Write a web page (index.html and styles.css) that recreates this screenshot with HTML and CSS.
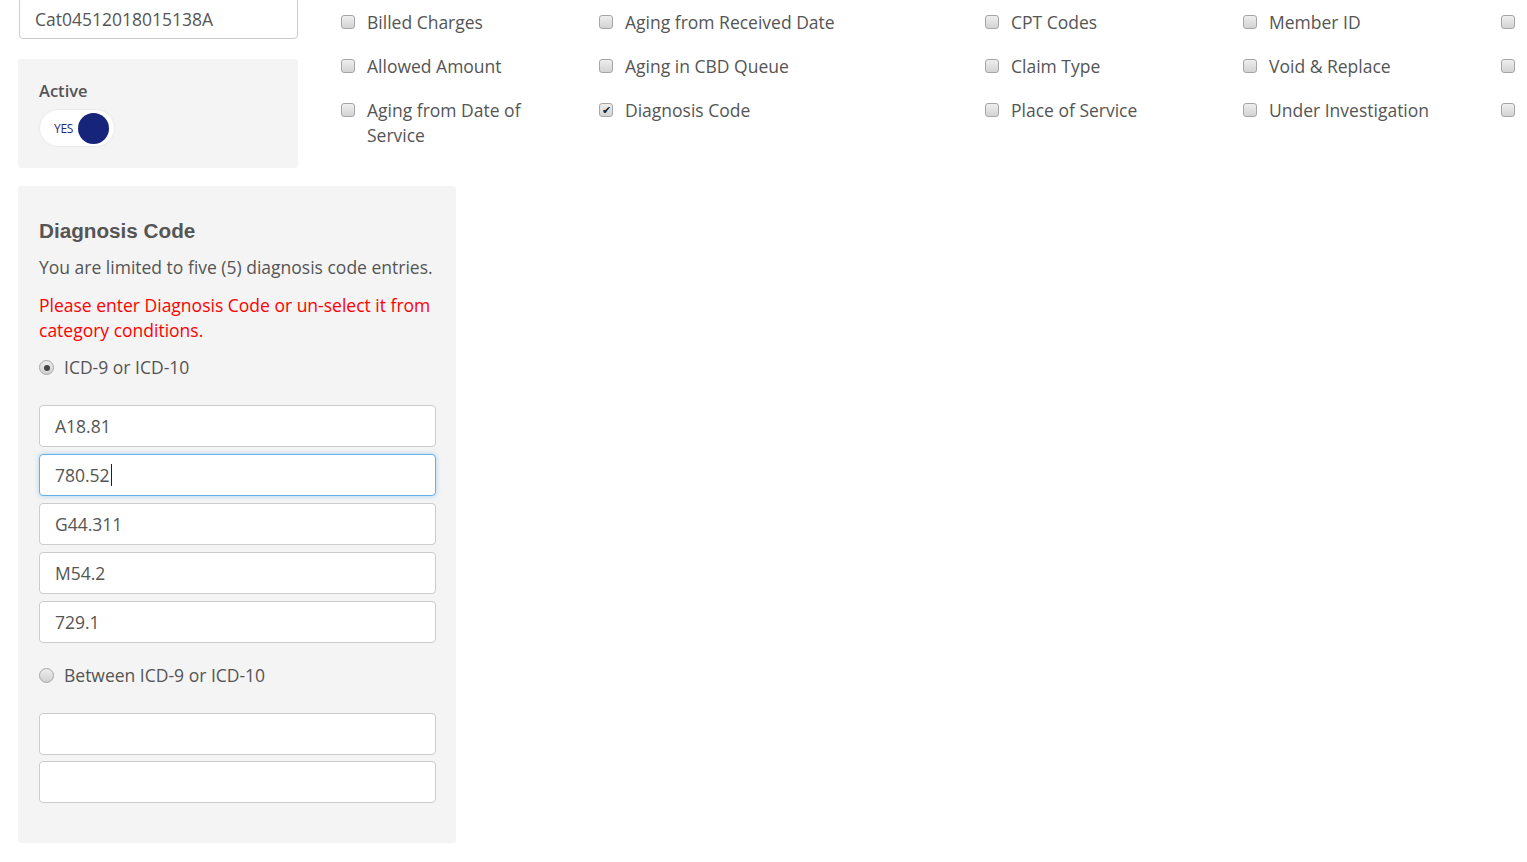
FILE: index.html
```html
<!DOCTYPE html>
<html>
<head>
<meta charset="utf-8">
<link rel="stylesheet" href="styles.css">
</head>
<body>
<div class="page">
  <div class="top">
    <div class="left">
      <div class="field field-top">Cat04512018015138A</div>
      <div class="active-box">
        <div class="active-label">Active</div>
        <div class="toggle"><span class="toggle-text">YES</span><span class="knob"></span></div>
      </div>
    </div>
    <div class="checks">
      <div class="col c1">
        <div class="chk"><span class="box"></span><span class="lbl">Billed Charges</span></div>
        <div class="chk"><span class="box"></span><span class="lbl">Allowed Amount</span></div>
        <div class="chk"><span class="box"></span><span class="lbl">Aging from Date of Service</span></div>
      </div>
      <div class="col c2">
        <div class="chk"><span class="box"></span><span class="lbl">Aging from Received Date</span></div>
        <div class="chk"><span class="box"></span><span class="lbl">Aging in CBD Queue</span></div>
        <div class="chk"><span class="box checked">&#10004;</span><span class="lbl">Diagnosis Code</span></div>
      </div>
      <div class="col c3">
        <div class="chk"><span class="box"></span><span class="lbl">CPT Codes</span></div>
        <div class="chk"><span class="box"></span><span class="lbl">Claim Type</span></div>
        <div class="chk"><span class="box"></span><span class="lbl">Place of Service</span></div>
      </div>
      <div class="col c4">
        <div class="chk"><span class="box"></span><span class="lbl">Member ID</span></div>
        <div class="chk"><span class="box"></span><span class="lbl">Void &amp; Replace</span></div>
        <div class="chk"><span class="box"></span><span class="lbl">Under Investigation</span></div>
      </div>
      <div class="col c5">
        <div class="chk"><span class="box"></span></div>
        <div class="chk"><span class="box"></span></div>
        <div class="chk"><span class="box"></span></div>
      </div>
    </div>
  </div>

  <div class="diag">
    <h3 class="diag-title">Diagnosis Code</h3>
    <p class="diag-note">You are limited to five (5) diagnosis code entries.</p>
    <p class="diag-error">Please enter Diagnosis Code or un-select it from category conditions.</p>
    <div class="radio-row"><span class="radio on"></span><span class="lbl">ICD-9 or ICD-10</span></div>
    <div class="fields">
      <div class="field">A18.81</div>
      <div class="field focus">780.52<span class="caret"></span></div>
      <div class="field">G44.311</div>
      <div class="field">M54.2</div>
      <div class="field">729.1</div>
    </div>
    <div class="radio-row second"><span class="radio"></span><span class="lbl">Between ICD-9 or ICD-10</span></div>
    <div class="fields fields-two">
      <div class="field"></div>
      <div class="field"></div>
    </div>
  </div>
</div>
</body>
</html>
```

FILE: styles.css
```css
* { box-sizing: border-box; }
html, body { margin: 0; padding: 0; background: #fff; }
body {
  font-family: "Open Sans", "Liberation Sans", sans-serif;
  color: #555;
  overflow: hidden;
  width: 1527px;
  height: 862px;
}
.page {
  padding-left: 18px;
  margin-top: -3px;
}
.top {
  display: flex;
  align-items: flex-start;
}
.left {
  width: 280px;
  flex: none;
}
.field {
  height: 42px;
  border: 1px solid #ccc;
  border-radius: 4px;
  background: #fff;
  font-size: 17.5px;
  color: #555;
  padding: 0 15px;
  display: flex;
  align-items: center;
}
.field-top {
  margin-left: 1px;
  width: 279px;
  padding-top: 2px;
}
.active-box {
  margin-top: 20px;
  height: 109px;
  background: #f4f4f4;
  border-radius: 3px;
  padding: 21px 20px 0;
}
.active-label {
  font-size: 16.5px;
  font-weight: 600;
  line-height: 22px;
  color: #555;
  padding-left: 1px;
}
.toggle {
  margin-top: 8px;
  margin-left: 2px;
  width: 74px;
  height: 36px;
  border-radius: 18px;
  background: #fff;
  box-shadow: 0 0 2px rgba(0,0,0,0.12);
  display: flex;
  align-items: center;
  padding: 0 4px 0 14px;
  gap: 2px;
}
.toggle-text {
  font-size: 12px;
  color: #1f2a7c;
  letter-spacing: -0.3px;
}
.knob {
  width: 31px;
  height: 31px;
  border-radius: 50%;
  background: #16247a;
  margin-left: 3px;
}
.checks {
  margin-left: 32px;
  display: grid;
  grid-template-columns: 258px 386px 258px 258px 258px;
  padding-top: 13px;
}
.col {
  padding: 0 15px 0 11px;
  display: flex;
  flex-direction: column;
  gap: 19px;
}
.chk {
  display: flex;
  align-items: flex-start;
  font-size: 17.5px;
  line-height: 25px;
  min-height: 25px;
}
.box {
  flex: none;
  width: 14px;
  height: 14px;
  margin-top: 5px;
  margin-right: 12px;
  border: 1px solid #a6a6a6;
  border-radius: 3px;
  background: linear-gradient(#eeeeee, #d3d3d3);
  font-size: 11px;
  line-height: 12px;
  text-align: center;
  color: #222;
}
.lbl { color: #555; }
.diag {
  margin-top: 18px;
  width: 438px;
  background: #f4f4f4;
  border-radius: 3px;
  padding: 30px 21px 40px;
  height: 657px;
}
.diag-title {
  margin: 0;
  font-family: "Liberation Sans", Arial, sans-serif;
  font-weight: bold;
  font-size: 20.7px;
  line-height: 30px;
  color: #555;
}
.diag-note {
  margin: 9px 0 0;
  font-size: 17.5px;
  line-height: 25px;
  white-space: nowrap;
}
.diag-error {
  margin: 13px -8px 0 0;
  font-size: 17.5px;
  line-height: 25px;
  color: #f00;
}
.radio-row {
  display: flex;
  align-items: center;
  margin-top: 12px;
  font-size: 17.5px;
  line-height: 25px;
}
.radio {
  width: 15px;
  height: 15px;
  border-radius: 50%;
  border: 1px solid #a6a6a6;
  background: linear-gradient(#eeeeee, #d0d0d0);
  margin-right: 10px;
  position: relative;
  flex: none;
}
.radio.on::after {
  content: "";
  position: absolute;
  left: 3.5px;
  top: 3.5px;
  width: 6px;
  height: 6px;
  border-radius: 50%;
  background: #444;
}
.fields {
  margin-top: 25px;
  width: 397px;
  display: flex;
  flex-direction: column;
  gap: 6.9px;
}
.fields .field {
  height: 42px;
}
.field.focus {
  border-color: #66afe9;
  box-shadow: 0 0 5px rgba(102,175,233,0.5);
}
.caret {
  display: inline-block;
  width: 1px;
  height: 22px;
  background: #222;
  margin-left: 1px;
}
.radio-row.second {
  margin-top: 20px;
}
.fields-two {
  margin-top: 25px;
}
```
